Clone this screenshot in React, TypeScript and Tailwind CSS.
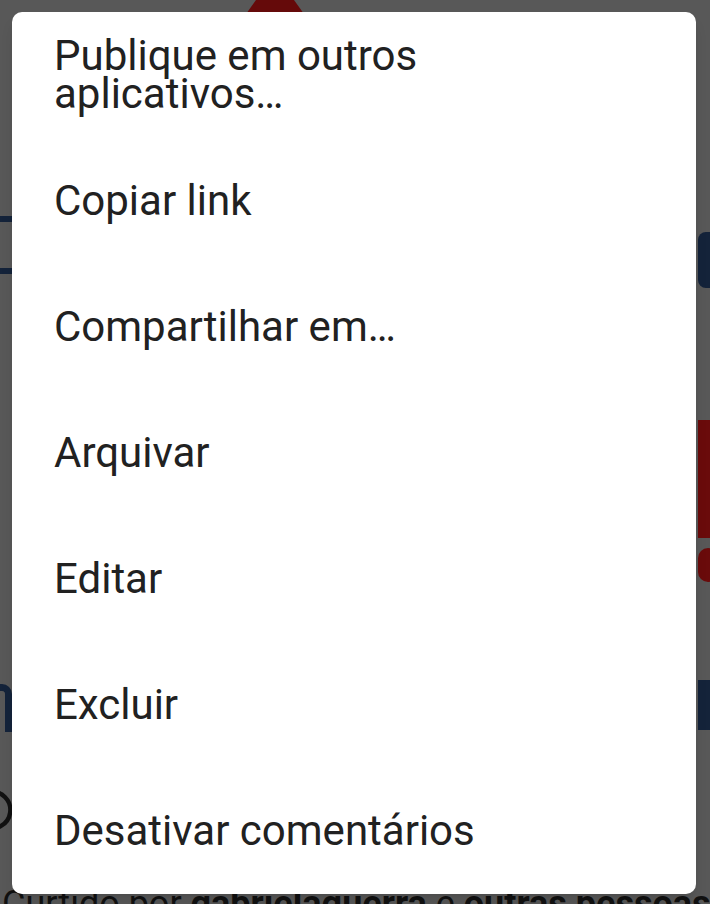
import { MessageCircle } from 'lucide-react';

const items = [
    'Publique em outros aplicativos…',
    'Copiar link',
    'Compartilhar em…',
    'Arquivar',
    'Editar',
    'Excluir',
    'Desativar comentários',
];

export default function App() {
    return (
        <div
            className="relative w-[710px] h-[904px] overflow-hidden bg-[#585858] flex flex-col"
            style={{ fontFamily: 'Roboto, "Noto Sans", sans-serif' }}
        >
            {/* dimmed post behind the menu */}
            <div className="h-[14px] pl-[246px] flex">
                <svg width="60" height="14" viewBox="0 0 60 14">
                    <path d="M10 0 H48 L58 14 H0 Z" fill="#650a0a" />
                </svg>
            </div>
            <div className="flex-1 flex justify-between">
                <div className="w-[12px] flex flex-col items-end">
                    <div className="mt-[202px] w-[12px] h-[6px] bg-[#14233a]" />
                    <div className="mt-[46px] w-[12px] h-[6px] bg-[#14233a]" />
                    <div className="mt-[410px] w-[12px] h-[48px] border-r-[7px] border-t-[7px] border-[#14233a] rounded-tr-[10px]" />
                    <div className="mt-[54px] -mr-[2px] text-[#111]">
                        <MessageCircle className="w-[44px] h-[48px]" strokeWidth={2.4} />
                    </div>
                </div>
                <div className="w-[12px] flex flex-col">
                    <div className="mt-[218px] h-[56px] bg-[#14233a] rounded-l-[8px]" />
                    <div className="mt-[132px] h-[118px] bg-[#6a0b0b]" />
                    <div className="mt-[10px] w-[20px] h-[34px] bg-[#6a0b0b] rounded-full" />
                    <div className="mt-[98px] h-[50px] bg-[#14233a]" />
                </div>
            </div>
            <div className="h-[12px] pl-[2px] whitespace-nowrap text-[36px] leading-[24px] text-[#111]">
                Curtido por <span className="font-bold">gabrielaguerra</span> e <span className="font-bold">outras pessoas</span>
            </div>

            {/* menu */}
            <div className="absolute left-[12px] top-[12px] w-[684px] rounded-[10px] bg-white shadow-lg">
                {items.map((item) => (
                    <div
                        key={item}
                        className="h-[126px] flex items-center pl-[42px] pr-[220px] text-[42px] leading-[38px] text-[#212121]"
                    >
                        {item}
                    </div>
                ))}
            </div>
        </div>
    );
}
